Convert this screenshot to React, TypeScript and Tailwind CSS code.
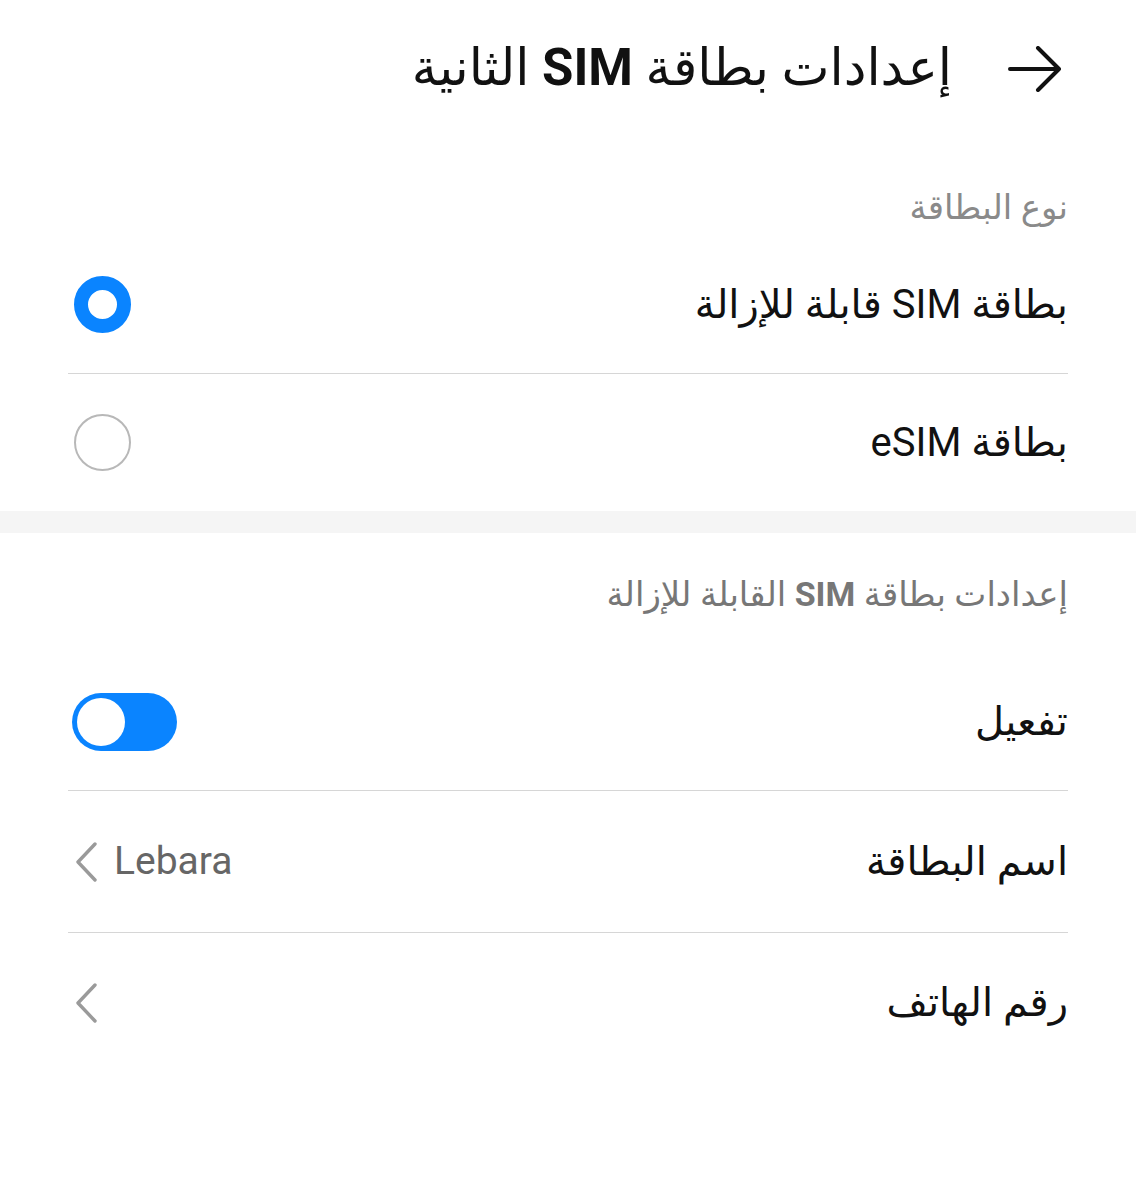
function Radio({ checked }: { checked: boolean }) {
  return checked ? (
    <span className="block w-[57px] h-[57px] rounded-full border-[14px] border-[#0a84ff] bg-white shrink-0" />
  ) : (
    <span className="block w-[57px] h-[57px] rounded-full border-[2.5px] border-[#b8b8b8] bg-white shrink-0" />
  );
}

function Chevron() {
  return (
    <svg width="24" height="40" viewBox="0 0 24 40" className="shrink-0">
      <path
        d="M21 2L4 20L21 38"
        fill="none"
        stroke="#9a9a9a"
        strokeWidth="3.4"
        strokeLinecap="round"
        strokeLinejoin="round"
      />
    </svg>
  );
}

function Row({
  label,
  children,
  divider = true,
  h = "h-[138px]",
}: {
  label: React.ReactNode;
  children?: React.ReactNode;
  divider?: boolean;
  h?: string;
}) {
  return (
    <div
      className={`flex items-center justify-between ${h} ${
        divider ? "border-b border-[#d6d6d6]" : ""
      }`}
    >
      <span className="text-[40px] text-[#111]">{label}</span>
      {children}
    </div>
  );
}

export default function App() {
  return (
    <div
      dir="rtl"
      className="w-[1136px] h-[1200px] bg-white font-['Roboto','DejaVu_Sans',sans-serif]"
    >
      <div className="flex items-center gap-[56px] px-[74px] pt-[4px] h-[133px]">
        <svg width="54" height="46" viewBox="0 0 54 46" className="shrink-0">
          <path
            d="M2 23H51M30 2L51 23L30 44"
            fill="none"
            stroke="#111"
            strokeWidth="4"
            strokeLinecap="round"
            strokeLinejoin="round"
          />
        </svg>
        <h1 className="text-[51px] text-[#111]">
          إعدادات بطاقة <span className="font-bold">SIM</span> الثانية
        </h1>
      </div>

      <div className="px-[68px]">
        <div className="h-[103px] flex items-end pb-[3px] text-[34px] text-[#8a8a8a]">
          نوع البطاقة
        </div>
        <Row label="بطاقة SIM قابلة للإزالة">
          <span className="ml-[6px]">
            <Radio checked />
          </span>
        </Row>
        <Row label="بطاقة eSIM" divider={false} h="h-[137px]">
          <span className="ml-[6px]">
            <Radio checked={false} />
          </span>
        </Row>
      </div>

      <div className="h-[22px] bg-[#f5f5f5]" />

      <div className="px-[68px]">
        <div className="h-[121px] flex items-start pt-[36px] text-[34px] text-[#777]">
          <span>
            إعدادات بطاقة <span className="font-bold">SIM</span> القابلة للإزالة
          </span>
        </div>
        <Row label="تفعيل" h="h-[137px]">
          <span className="w-[105px] h-[58px] rounded-full bg-[#0a84ff] flex items-center justify-end px-[5px] ml-[4px]">
            <span className="w-[48px] h-[48px] rounded-full bg-white" />
          </span>
        </Row>
        <Row label="اسم البطاقة" h="h-[142px]">
          <span className="flex items-center gap-[16px] text-[39px] text-[#666] ml-[6px]">
            Lebara
            <Chevron />
          </span>
        </Row>
        <Row label="رقم الهاتف" divider={false} h="h-[140px]">
          <span className="ml-[6px]">
            <Chevron />
          </span>
        </Row>
      </div>
    </div>
  );
}
